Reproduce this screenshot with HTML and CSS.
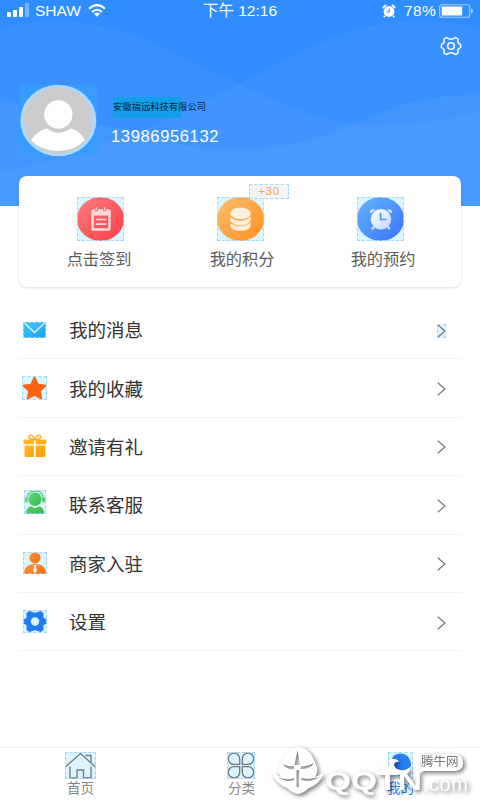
FILE: index.html
```html
<!DOCTYPE html>
<html lang="zh-CN">
<head>
<meta charset="utf-8">
<title>我的</title>
<link rel="stylesheet" href="styles.css">
</head>
<body>
<svg width="0" height="0" class="defs">
  <defs>
    <linearGradient id="red" x1="0" y1="0" x2="1" y2="1"><stop offset="0" stop-color="#ff7d7d"/><stop offset="1" stop-color="#fb3c45"/></linearGradient>
    <linearGradient id="orange" x1="0" y1="0" x2="1" y2="1"><stop offset="0" stop-color="#fdbc6d"/><stop offset="1" stop-color="#ff9020"/></linearGradient>
    <linearGradient id="blue" x1="0" y1="0" x2="1" y2="1"><stop offset="0" stop-color="#66b4ff"/><stop offset="1" stop-color="#3773fb"/></linearGradient>
    <linearGradient id="sky" x1="0" y1="0" x2="1" y2="1"><stop offset="0" stop-color="#43c5ff"/><stop offset="1" stop-color="#18a4f5"/></linearGradient>
    <linearGradient id="gold" x1="0" y1="0" x2="1" y2="1"><stop offset="0" stop-color="#ffbd2d"/><stop offset="1" stop-color="#fb9c05"/></linearGradient>
    <linearGradient id="green" x1="0" y1="0" x2="1" y2="1"><stop offset="0" stop-color="#65d874"/><stop offset="1" stop-color="#35b653"/></linearGradient>
    <linearGradient id="amber" x1="0" y1="0" x2="1" y2="1"><stop offset="0" stop-color="#ff9b32"/><stop offset="1" stop-color="#f76519"/></linearGradient>
    <linearGradient id="pale" x1="0" y1="0" x2="1" y2="1"><stop offset="0" stop-color="#fff"/><stop offset="1" stop-color="#fff" stop-opacity=".65"/></linearGradient>
  </defs>
</svg>
<div class="screen">
  <header class="hero">
    <svg class="waves" viewBox="0 0 480 206">
      <path d="M0 30Q30 21 52 21C125 21 165 49 210 70C292 110 325 124 365 125Q430 125 480 112V206H0Z" fill="#fff" opacity=".045"/>
      <path d="M0 172C130 145 200 104 260 73C325 39 365 21 420 21Q452 21 480 30V206H0Z" fill="#fff" opacity=".045"/>
      <path d="M0 97C60 127 130 122 170 142C220 154 290 153 350 126C400 102 430 95 480 95V206H0Z" fill="#fff" opacity=".05"/>
    </svg>
    <div class="status">
      <div class="carrier">
        <svg width="22" height="14" viewBox="0 0 22 14" fill="#fff"><rect y="9" width="4" height="5" rx="1"/><rect x="6" y="7" width="4" height="7" rx="1"/><rect x="12" y="4" width="4" height="10" rx="1"/><rect x="18" width="4" height="14" rx="1" opacity=".35"/></svg>
        <span>SHAW</span>
        <svg width="18" height="13" viewBox="0 0 18 13" fill="none" stroke="#fff" stroke-width="2.1"><path d="M1 4.7Q9-2.5 17 4.7M4 8Q9 3.5 14 8"/><path d="M6 9.8Q9 7.3 12 9.8L9 12.7Z" fill="#fff" stroke="none"/></svg>
      </div>
      <span class="time">下午 12:16</span>
      <div class="battery">
        <svg width="14" height="14" viewBox="0 0 14 14"><circle cx="7" cy="7.5" r="5.4" fill="#fff"/><path d="M.8 4L4 1M13.2 4L10 1M3 12L1.8 13.2M11 12L12.2 13.2" stroke="#fff" stroke-width="1.8"/><path d="M7.2 4.5V8H4.8" fill="none" stroke="#328ffd" stroke-width="1.1"/></svg>
        <span>78%</span>
        <svg width="34" height="14" viewBox="0 0 34 14"><rect x=".7" y=".7" width="30" height="12.6" rx="2" fill="none" stroke="#a8d1ff" stroke-width="1.1"/><rect x="2.7" y="2.5" width="20.5" height="9" rx=".7" fill="#fff"/><path d="M32 4.5Q34 5 34 7T32 9.5Z" fill="#a8d1ff"/></svg>
      </div>
    </div>
    <div class="tools"><svg width="22" height="20" viewBox="-11 -10 22 20" fill="none" stroke="#fff" stroke-width="1.5" stroke-linejoin="round"><path d="M-4.8-8.5L-2.4-7.3Q0-6 2.4-7.3L4.8-8.5L7-7L6.8-4.4Q7-2.5 9.6-1.4V1.4Q7 2.5 6.8 4.4L7 7L4.8 8.5L2.4 7.3Q0 6-2.4 7.3L-4.8 8.5L-7 7L-6.8 4.4Q-7 2.5-9.6 1.4V-1.4Q-7-2.5-6.8-4.4L-7-7Z"/><circle r="3.3"/></svg></div>
    <div class="profile">
      <svg class="avatar" width="77" height="73" viewBox="0 0 77 73"><defs><clipPath id="face"><ellipse cx="38.3" cy="36.5" rx="34.5" ry="33"/></clipPath></defs><rect y="1" width="77" height="71" fill="#379cfe"/><ellipse cx="38.3" cy="36.5" rx="38" ry="35.7" fill="#afd9fa"/><ellipse cx="38.3" cy="36.5" rx="34.5" ry="33" fill="#cbcbcb"/><g clip-path="url(#face)"><path d="M11 56Q18 46 27 44.5Q38 53 51 44.5Q59 46 65 56Q55 67 38 67T11 56Z" fill="#fff"/></g><circle cx="38.3" cy="30.5" r="14.2" fill="#fff"/></svg>
      <div class="who"><div class="company">安徽福远科技有限公司</div><div class="phone">13986956132</div></div>
    </div>
  </header>

  <section class="card">
    <div class="action"><span class="mark"><svg width="47" height="44" viewBox="0 0 46 43"><ellipse cx="23" cy="21.5" rx="23" ry="21.5" fill="url(#red)"/><path fill-rule="evenodd" d="M16 12H31Q33 12 33 14V31Q33 33 31 33H17Q14 33 14 31V14Q14 12 16 12ZM16.5 18V30.5H30.5V18Z" fill="#ffd9d8"/><path d="M19 10V14M27 10V14" stroke="#f65c62" stroke-width="3"/><path d="M19 10V13M27 10V13M18.5 22H28.5M18.5 26.5H28.5" stroke="#ffd9d8" stroke-width="1.6"/></svg></span><span>点击签到</span></div>
    <div class="action"><span class="mark"><svg width="47" height="44" viewBox="0 0 46 43"><ellipse cx="23" cy="21.5" rx="23" ry="21.5" fill="url(#orange)"/><g fill="#fff0d9"><path d="M13 26Q23 32 33 25V28Q32 33 23 33T13 28Z"/><path d="M13 20Q23 27 33 19V23Q30 28 23 28T13 23Z"/><ellipse cx="23" cy="16" rx="10" ry="5.7"/></g></svg></span><span class="nudge">我的积分</span><span class="bonus">+30</span></div>
    <div class="action"><span class="mark"><svg width="47" height="44" viewBox="0 0 46 43"><ellipse cx="23" cy="21.5" rx="23" ry="21.5" fill="url(#blue)"/><circle cx="23.5" cy="21.7" r="10" fill="url(#pale)"/><path d="M13 16Q12 11 18 12.5ZM34 16Q35 11 29 12.5Z" fill="#e4f2ff"/><path d="M17 29L14.5 31.5M30 29L32 31.5" stroke="#dceaff" stroke-width="2"/><path d="M23 15.5V22H29" fill="none" stroke="#4c90fb" stroke-width="1.6"/></svg></span><span class="nudge">我的预约</span></div>
  </section>

  <main class="menu">
    <div class="row"><span class="icon"><svg class="mark" width="23" height="16" viewBox="0 0 23 16"><rect width="23" height="16" rx="1" fill="url(#sky)"/><path d="M1.5 1L11.5 10.5L21.5 1" fill="none" stroke="#e4f8ff" stroke-width="1.3"/></svg></span><span>我的消息</span><svg class="arrow mark" viewBox="0 0 9 14"><path d="M.7.7L8 7L.7 13.3"/></svg></div>
    <div class="row"><span class="icon"><svg class="mark" width="25" height="24" viewBox="0 0 25 24"><path d="M12.5 1.2L16 8.4L23.8 9.5L18.2 15L19.5 22.8L12.5 19.2L5.5 22.8L6.8 15L1.2 9.5L9 8.4Z" fill="#fb6210" stroke="#fb6210" stroke-width="1.5" stroke-linejoin="round"/></svg></span><span>我的收藏</span><svg class="arrow" viewBox="0 0 9 14"><path d="M.7.7L8 7L.7 13.3"/></svg></div>
    <div class="row"><span class="icon"><svg width="24" height="24" viewBox="0 0 24 24"><path d="M11.5 6Q4 5 6.5 1.7Q9-.2 11.7 5.5Q14.5-.2 17.3 1.7Q19.5 5 12 6" fill="none" stroke="#ffb223" stroke-width="1.5"/><path d="M1.2 5.5H10.9V10.2H1.2Q.5 10.2.5 9V6.5Q.5 5.5 1.2 5.5ZM12.6 5.5H22.5Q23.3 5.5 23.3 6.5V9Q23.3 10.2 22.5 10.2H12.6ZM1.5 11.5H10.9V23H3Q1.5 23 1.5 21.5ZM12.6 11.5H22.2V21.5Q22.2 23 20.8 23H12.6Z" fill="url(#gold)"/></svg></span><span>邀请有礼</span><svg class="arrow" viewBox="0 0 9 14"><path d="M.7.7L8 7L.7 13.3"/></svg></div>
    <div class="row"><span class="icon lift"><svg class="mark" width="22" height="24" viewBox="0 0 22 23" preserveAspectRatio="none"><circle cx="11" cy="8.8" r="6.6" fill="url(#green)"/><path d="M3 10Q2 1.4 11 1T19 10" fill="none" stroke="#48c866" stroke-width="1.1"/><path d="M1 7.5H3.5V12H2Q0 11 1 7.5ZM21 7.5H18.5V12H20Q22 11 21 7.5ZM2 23Q2 16.5 7 15.5Q11 19 15 15.5Q20 16.5 20 23Z" fill="url(#green)"/></svg></span><span>联系客服</span><svg class="arrow" viewBox="0 0 9 14"><path d="M.7.7L8 7L.7 13.3"/></svg></div>
    <div class="row"><span class="icon"><svg class="mark" width="24" height="22" viewBox="0 0 24 22"><circle cx="12" cy="5.8" r="5.6" fill="url(#amber)"/><path d="M1 22Q1 12.8 10 12H14Q23 12.8 23 22Z" fill="url(#amber)"/><path d="M10.5 13H13.5L13 15L14 19L12 21L10 19L11 15Z" fill="#fff1df"/></svg></span><span>商家入驻</span><svg class="arrow" viewBox="0 0 9 14"><path d="M.7.7L8 7L.7 13.3"/></svg></div>
    <div class="row"><span class="icon"><svg class="mark" width="24" height="23" viewBox="-12 -11.5 24 23"><path fill-rule="evenodd" d="M-5.7-10.6L-2.5-9.4Q0-8 2.5-9.4L5.7-10.6L8.7-8.2L8.3-4.5Q9-2.7 11.7-2V2Q9 2.7 8.3 4.5L8.7 8.2L5.7 10.6L2.5 9.4Q0 8-2.5 9.4L-5.7 10.6L-8.7 8.2L-8.3 4.5Q-9 2.7-11.7 2V-2Q-9-2.7-8.3-4.5L-8.7-8.2ZM0-4.2A4.2 4.2 0 1 0 .01-4.2Z" fill="#207cf6"/></svg></span><span>设置</span><svg class="arrow" viewBox="0 0 9 14"><path d="M.7.7L8 7L.7 13.3"/></svg></div>
  </main>

  <nav class="tabs">
    <div class="tab"><svg class="mark" width="31" height="27" viewBox="0 0 31 27" fill="none" stroke="#707878" stroke-width="1.3"><path d="M.7 14.7L15.5 1.5L30.3 14.7M20.5 3.5H26V10M5 14.5V26H12V18H18.5V26H26V14.5"/></svg><span>首页</span></div>
    <div class="tab middle"><svg class="mark" width="28" height="27" viewBox="0 0 28 27" fill="none" stroke="#707878" stroke-width="1.3"><path d="M7 1A5.7 5.7 0 1 0 7 12.4H12.7V6.7A5.7 5.7 0 0 0 7 1ZM21 1A5.7 5.7 0 1 1 21 12.4H15.3V6.7A5.7 5.7 0 0 1 21 1ZM7 26A5.7 5.7 0 1 1 7 14.6H12.7V20.3A5.7 5.7 0 0 1 7 26ZM21 26A5.7 5.7 0 1 0 21 14.6H15.3V20.3A5.7 5.7 0 0 0 21 26Z"/></svg><span>分类</span></div>
    <div class="tab active"><svg class="mark" width="25" height="27" viewBox="0 0 25 27"><ellipse cx="12.5" cy="12.5" rx="10.5" ry="11" fill="#267ef4"/></svg><span>我的</span></div>
  </nav>

  <div class="watermark">
    <svg width="220" height="53" viewBox="0 0 220 53" fill="#fff">
      <path fill-rule="evenodd" d="M38 0Q25 1 20 18Q17 24 21 30L12 26Q16 37 27 41Q32 46 38 47Q44 46 49 41Q60 37 64 26L55 30Q59 24 56 18Q51 1 38 0ZM37.5 3L40 18H34.5ZM22 16Q27 20 34 19V22Q26 23 22 16ZM41 19Q48 20 54 16Q51 22 41 22ZM17 30Q28 34 34 31V33Q27 36 17 30ZM41 31Q50 33 59 30Q51 36 41 33ZM36.5 23H39V40H36.5Z"/>
      <path d="M120 27V23Q122 20 126 20Q131 20 129 15Q129 11 134 12Q138 12 139 15Q135 14 134 18Q135 22 140 23Q147 24 151 19Q150 26 145 28Z"/>
      <path d="M164 7H196Q203 8 203 16T194 24H164L157 27Q161 23 161 17V10Z"/>
    </svg>
    <span class="qq">QQTN</span><span class="dotcom">.com</span><span class="site">腾牛网</span>
  </div>
</div>
</body>
</html>
```
FILE: styles.css
```css
* { box-sizing: border-box; }
body { margin: 0; background: #fff; font-family: "Liberation Sans", "Noto Sans CJK SC", sans-serif; font-weight: 400; }
svg { display: block; flex: none; }
.defs { position: absolute; }
.screen { position: relative; width: 480px; height: 800px; overflow: hidden; display: flex; flex-direction: column; }
.hero { position: relative; height: 206px; flex: none; background: #308dff; color: #fff; }
.waves { position: absolute; inset: 0; width: 480px; height: 206px; }
.status { position: relative; height: 22px; padding: 0 7px; display: grid; grid-template-columns: 1fr auto 1fr; align-items: center; font-size: 15.5px; line-height: 22px; }
.carrier, .battery { display: flex; align-items: center; }
.carrier { gap: 6px; }
.carrier svg:first-child { margin-top: -2px; }
.carrier svg:last-child { margin-left: 1px; margin-top: -2px; }
.battery { justify-content: flex-end; gap: 3px; }
.battery span { margin-left: 5px; letter-spacing: .3px; }
.tools { position: relative; display: flex; justify-content: flex-end; padding: 14px 18px 0 0; }
.profile { position: relative; display: flex; margin: 28px 0 0 20px; }
.who { margin-left: 16px; padding-top: 13px; }
.company { width: 68px; height: 21px; background: #139fe7; color: #05263f; font-size: 9.3px; line-height: 20px; white-space: nowrap; }
.phone { margin: 8px 0 0 -2px; font-size: 16.5px; line-height: 20px; letter-spacing: .65px; }
.card { position: relative; height: 111px; flex: none; width: 442px; margin: -30px 0 0 19px; padding: 21px 11px 0 11px; border-radius: 8px; background: #fff; box-shadow: 0 1px 3px #0002; display: grid; grid-template-columns: repeat(3, 1fr); }
.action { position: relative; display: flex; flex-direction: column; align-items: center; gap: 6px; font-size: 16.2px; line-height: 24px; color: #5c5c5c; }
.action:first-child > span:last-child { margin-right: 2px; }
.nudge { margin-left: 4px; }
.action:last-child .nudge { margin-left: 6px; }
.mark { background: #dbf5ff; outline: 1px dashed #a2d8fa; outline-offset: -1px; }
.bonus { position: absolute; left: 79px; top: -13px; width: 40px; height: 15px; border: 1px dashed #a2d8fa; background: #f3f4f4; color: #f6a24b; font-size: 11.5px; line-height: 13px; text-align: center; letter-spacing: .7px; }
.menu { margin: 14px 19px 0; display: grid; grid-auto-rows: 58.4px; }
.row { display: flex; align-items: center; border-bottom: 1px solid #f4f4f4; font-size: 18.5px; line-height: 26px; color: #333; }
.row > span:nth-child(2) { padding-top: 3px; }
.icon { width: 31px; display: flex; justify-content: center; margin-right: 19px; }
.lift { margin-top: -5px; }
.arrow { width: 9px; height: 14px; margin: 2px 15px 0 auto; fill: none; stroke: #777; stroke-width: 1.2; }
.tabs { height: 53px; margin-top: auto; border-top: 1px solid #f2f2f2; padding-top: 4px; display: grid; grid-template-columns: repeat(3, 1fr); }
.tab { display: flex; flex-direction: column; align-items: center; color: #858585; font-size: 13.5px; line-height: 20px; }
.tab span { margin-left: 1px; }
.middle { padding-left: 2px; }
.active { color: #267ef4; }
.watermark { position: absolute; left: 260px; top: 747px; width: 220px; height: 53px; color: #fff; filter: drop-shadow(2px 2px 2px #0008); }
.watermark svg { position: absolute; top: 0; left: 0; }
.qq, .dotcom, .site { position: absolute; white-space: nowrap; }
.qq { left: 65px; top: 20px; font-size: 26px; line-height: 28px; font-weight: 700; transform: scaleX(1.29); transform-origin: left; }
.dotcom { left: 163px; top: 25px; font-size: 20px; line-height: 24px; letter-spacing: .5px; }
.site { left: 161px; top: 6px; font-size: 12.5px; line-height: 18px; color: #777; }
```
